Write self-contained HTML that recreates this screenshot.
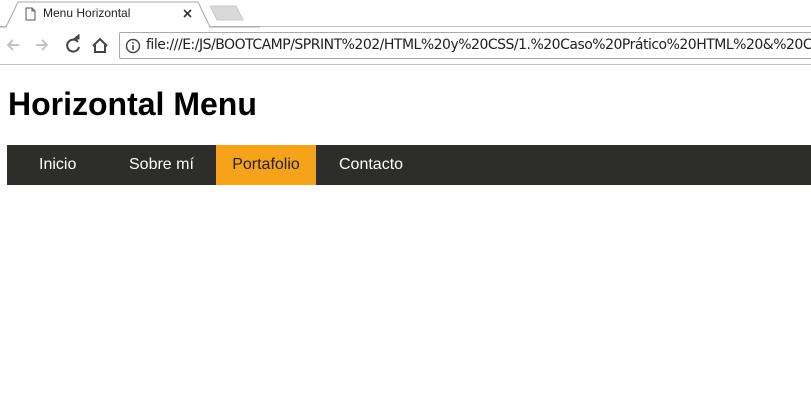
<!DOCTYPE html>
<html><head><meta charset="utf-8"><style>
body{margin:0;width:811px;height:409px;overflow:hidden;background:#fff;font-family:"Liberation Sans",Arial,sans-serif;position:relative}
.abs{position:absolute}
.tabbar{left:0;top:0;width:811px;height:27px;background:#fff;border-bottom:1px solid #bcbcbc;box-sizing:border-box}
.addr{left:119px;top:32px;width:692px;height:27px;border:1px solid #a9a9a9;border-right:none;border-radius:2px 0 0 2px;box-sizing:border-box;background:#fff}
.url{left:146px;top:37px;width:665px;overflow:hidden;font-size:14px;color:#222;white-space:nowrap;font-family:"DejaVu Sans","Liberation Sans",sans-serif;letter-spacing:-0.5px}
.sep{left:0;top:64px;width:811px;height:1px;background:#bdbdbd}
h1{position:absolute;left:8px;top:86px;margin:0;font-size:32px;font-weight:bold;color:#000}
.menu{left:7px;top:145px;width:804px;height:40px;background:#2d2d29}
.item{top:145px;height:40px;line-height:40px;color:#fff;font-size:16px}
</style></head><body>
<div class="abs tabbar"></div>
<svg class="abs" style="left:0;top:0" width="260" height="28">
<path d="M0 27 L6 27 L18 2 L198 2 L210 27 L811 27" fill="#fff" stroke="#a7a7a7"/>
<path d="M210 6 L236 6 L243 20 L217 20 Z" fill="#d9d9d9" stroke="#c8c8c8"/>
<path d="M26 8 h6 l3 3 v9 h-9 z M32 8 v3 h3" fill="none" stroke="#555"/>
<path d="M184 10 l7 7 M191 10 l-7 7" stroke="#333" stroke-width="1.6"/>
</svg>
<div class="abs" style="left:43px;top:6px;font-size:12px;color:#222">Menu Horizontal</div>
<svg class="abs" style="left:0;top:30px" width="118" height="32">
<path d="M19 15 h-10 M13 10 l-5 5 5 5" fill="none" stroke="#c3c3c3" stroke-width="2"/>
<path d="M36 15 h10 M42 10 l5 5 -5 5" fill="none" stroke="#c3c3c3" stroke-width="2"/>
<path d="M78 12 a6 6 0 1 0 1 5" fill="none" stroke="#444" stroke-width="2"/>
<path d="M73 9 l6 0 0 -5" fill="#444" stroke="#444" stroke-width="1"/>
<path d="M93 16 l7 -7 7 7 M95 15 v7 h10 v-7" fill="none" stroke="#444" stroke-width="2"/>
</svg>
<div class="abs addr"></div>
<svg class="abs" style="left:125px;top:38px" width="16" height="16"><circle cx="8" cy="8" r="6.5" fill="none" stroke="#444" stroke-width="1.4"/><rect x="7.2" y="7" width="1.6" height="5" fill="#444"/><rect x="7.2" y="4" width="1.6" height="1.6" fill="#444"/></svg>
<div class="abs url">file:///E:/JS/BOOTCAMP/SPRINT%202/HTML%20y%20CSS/1.%20Caso%20Prático%20HTML%20&amp;%20CSS/2.%</div>
<div class="abs sep"></div>
<h1>Horizontal Menu</h1>
<div class="abs menu"></div>
<div class="abs item" style="left:39px">Inicio</div>
<div class="abs item" style="left:129px">Sobre mí</div>
<div class="abs item" style="left:216px;width:100px;background:#f7a21b;color:#222;text-align:center">Portafolio</div>
<div class="abs item" style="left:339px">Contacto</div>
</body></html>
